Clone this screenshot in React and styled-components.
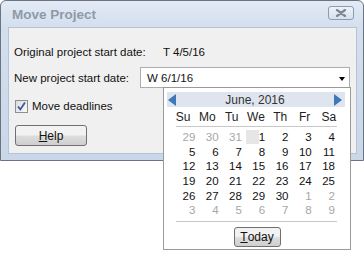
import styled, { createGlobalStyle } from 'styled-components'

const GlobalStyle = createGlobalStyle`
    body {
        margin: 0;
        background: #ffffff;
        font-family: "Liberation Sans", Arial, sans-serif;
    }
`

const weeks = [
    [[29, 1], [30, 1], [31, 1], [1, 0, 1], [2], [3], [4]],
    [[5], [6], [7], [8], [9], [10], [11]],
    [[12], [13], [14], [15], [16], [17], [18]],
    [[19], [20], [21], [22], [23], [24], [25]],
    [[26], [27], [28], [29], [30], [1, 1], [2, 1]],
    [[3, 1], [4, 1], [5, 1], [6, 1], [7, 1], [8, 1], [9, 1]],
]

const dayNames = ['Su', 'Mo', 'Tu', 'We', 'Th', 'Fr', 'Sa']

const App = () => {
    return (
        <Page>
            <GlobalStyle />
            <Window>
                <TitleBar>
                    <Title>Move Project</Title>
                    <CloseButton>
                        <svg width="12" height="8" viewBox="0 0 12 8">
                            <path d="M2 1 L10 7 M10 1 L2 7" stroke="#7d8894" strokeWidth="2.2" strokeLinecap="round" />
                        </svg>
                    </CloseButton>
                </TitleBar>
                <Client>
                    <Row>
                        <Label>Original project start date:</Label>
                        <Value>T 4/5/16</Value>
                    </Row>
                    <Row $top={5}>
                        <Label>New project start date:</Label>
                        <DateInput>
                            <span>W 6/1/16</span>
                            <DropArrow />
                            <Popup>
                                <MonthBar>
                                    <NavArrow />
                                    <MonthTitle>June, 2016</MonthTitle>
                                    <NavArrow $right />
                                </MonthBar>
                                <WeekHeader>
                                    {dayNames.map((d) => (
                                        <DayName key={d}>{d}</DayName>
                                    ))}
                                </WeekHeader>
                                <Divider $top={2} />
                                <DayGrid>
                                    {weeks.flat().map(([n, muted, today], i) => (
                                        <Day key={i} $muted={muted} $today={today}>
                                            {n}
                                        </Day>
                                    ))}
                                </DayGrid>
                                <Divider $top={3} />
                                <TodayButton>
                                    <u>T</u>oday
                                </TodayButton>
                            </Popup>
                        </DateInput>
                    </Row>
                    <CheckRow>
                        <CheckBox>
                            <svg width="11" height="11" viewBox="0 0 11 11">
                                <path d="M2 5.5 L4.3 8.5 L9 1.5" fill="none" stroke="#3d5a9c" strokeWidth="1.8" />
                            </svg>
                        </CheckBox>
                        <span>Move deadlines</span>
                    </CheckRow>
                    <HelpButton>
                        <u>H</u>elp
                    </HelpButton>
                </Client>
            </Window>
        </Page>
    )
}

const Page = styled.div`
    width: 364px;
    height: 254px;
    overflow: hidden;
`

const Window = styled.div`
    width: 364px;
    height: 161px;
    box-sizing: border-box;
    border: 1px solid #6b7480;
    border-radius: 6px 6px 0 0;
    background: linear-gradient(#e2eaf5, #d4dfee 26px, #c9d7e9);
    display: flex;
    flex-direction: column;
`

const TitleBar = styled.div`
    height: 26px;
    display: flex;
    align-items: center;
    justify-content: space-between;
    padding: 0 9px 0 11px;
`

const Title = styled.div`
    font-size: 13.5px;
    font-weight: bold;
    color: #8f9aa6;
    margin-top: 1px;
`

const CloseButton = styled.div`
    width: 24px;
    height: 12px;
    border: 1px solid #8e9cae;
    border-radius: 3px;
    background: linear-gradient(#eef3f9, #d6e0ec);
    display: flex;
    align-items: center;
    justify-content: center;
    margin-top: -2px;
`

const Client = styled.div`
    margin: 0 6px 0 7px;
    height: 127px;
    box-sizing: border-box;
    border: 1px solid #b4c3d6;
    background: #f0f0f0;
    padding: 14px 0 0 5px;
    font-size: 11.5px;
    color: #111;
`

const Row = styled.div`
    display: grid;
    grid-template-columns: 126px 210px;
    align-items: center;
    height: ${(p) => (p.$top ? 21 : 20)}px;
    margin-top: ${(p) => p.$top || 0}px;
`

const Label = styled.div`
    white-space: nowrap;
`

const Value = styled.div`
    padding-left: 23px;
`

const DateInput = styled.div`
    position: relative;
    height: 21px;
    box-sizing: border-box;
    border: 1px solid #abadb3;
    background: #fff;
    display: flex;
    align-items: center;
    justify-content: space-between;
    padding: 0 4px 0 6px;
`

const DropArrow = styled.div`
    width: 0;
    height: 0;
    border-left: 3.5px solid transparent;
    border-right: 3.5px solid transparent;
    border-top: 4px solid #000;
    margin-top: 2px;
`

const Popup = styled.div`
    position: absolute;
    left: 22px;
    top: 19px;
    width: 188px;
    box-sizing: border-box;
    border: 1px solid #9a9a9a;
    background: #fff;
    padding-bottom: 2px;
    display: flex;
    flex-direction: column;
    z-index: 2;
`

const MonthBar = styled.div`
    margin: 4px 0 0 3px;
    width: 178px;
    height: 15px;
    background: #dfe5ee;
    display: flex;
    align-items: center;
    justify-content: space-between;
`

const NavArrow = styled.div`
    width: 0;
    height: 0;
    border-top: 6px solid transparent;
    border-bottom: 6px solid transparent;
    ${(p) => (p.$right ? 'border-left: 8px solid #3f77b8; margin-right: 3px;' : 'border-right: 8px solid #3f77b8; margin-left: 1px;')}
`

const MonthTitle = styled.div`
    font-size: 12px;
    color: #333;
`

const WeekHeader = styled.div`
    margin: 3px 0 0 7px;
    width: 170px;
    height: 14px;
    display: grid;
    grid-template-columns: repeat(7, 1fr);
    align-items: center;
`

const DayName = styled.div`
    text-align: center;
    font-size: 12px;
    color: #222;
`

const Divider = styled.div`
    margin: ${(p) => p.$top}px 0 0 12px;
    width: 161px;
    height: 1px;
    background: #c8c8c8;
`

const DayGrid = styled.div`
    margin: 3px 0 0 8px;
    width: 163px;
    display: grid;
    grid-template-columns: repeat(7, 1fr);
    grid-auto-rows: 14.67px;
    align-items: center;
`

const Day = styled.div`
    text-align: right;
    font-size: 11.5px;
    line-height: 14.67px;
    color: ${(p) => (p.$muted ? '#a6a6a6' : '#111')};
    background: ${(p) => (p.$today ? 'linear-gradient(#e6e6e6, #e6e6e6) no-repeat 4px 0 / 13px 14px' : 'none')};
`

const TodayButton = styled.div`
    align-self: center;
    margin-top: 5px;
    width: 47px;
    height: 20px;
    box-sizing: border-box;
    border: 1px solid #707070;
    border-radius: 3px;
    background: linear-gradient(#f2f2f2 45%, #dcdcdc 55%, #cfcfcf);
    font-size: 12px;
    color: #111;
    display: flex;
    align-items: center;
    justify-content: center;
`

const CheckRow = styled.div`
    display: flex;
    align-items: center;
    gap: 4px;
    margin: 11px 0 0 1px;
    height: 14px;
`

const CheckBox = styled.div`
    width: 13px;
    height: 13px;
    box-sizing: border-box;
    border: 1px solid #8e8f8f;
    background: linear-gradient(135deg, #dcdcdc, #fafafa);
    display: flex;
    align-items: center;
    justify-content: center;
`

const HelpButton = styled.div`
    margin: 12px 0 0 1px;
    width: 72px;
    height: 21px;
    box-sizing: border-box;
    border: 1px solid #707070;
    border-radius: 3px;
    background: linear-gradient(#f2f2f2 45%, #dcdcdc 55%, #cfcfcf);
    display: flex;
    align-items: center;
    justify-content: center;
    font-size: 12px;
`

export default App
